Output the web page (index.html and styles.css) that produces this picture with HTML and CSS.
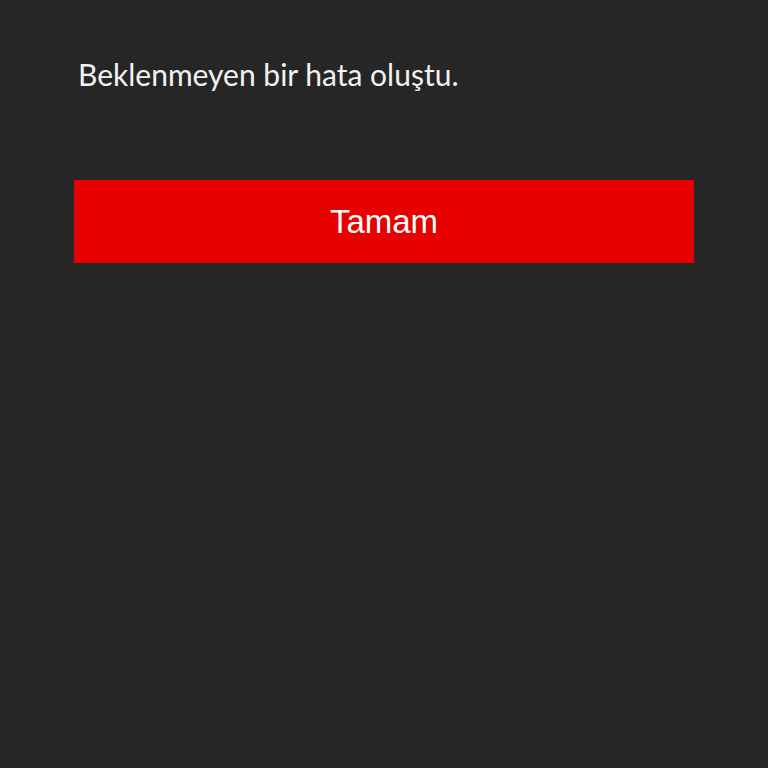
FILE: index.html
```html
<!DOCTYPE html>
<html lang="tr">
<head>
<meta charset="utf-8">
<link rel="stylesheet" href="styles.css">
</head>
<body>
<main class="dialog">
  <p class="message">Beklenmeyen bir hata oluştu.</p>
  <button class="ok-btn" type="button">Tamam</button>
</main>
</body>
</html>
```
FILE: styles.css
```css
html, body {
  margin: 0;
  padding: 0;
  background: #262626;
  height: 100%;
}
.dialog {
  display: flex;
  flex-direction: column;
  padding: 56px 74px 0 74px;
}
.message {
  margin: 0 0 0 4px;
  color: #f2f2f2;
  font-family: Lato, "Open Sans", sans-serif;
  font-size: 30px;
  line-height: 36px;
  font-weight: 400;
}
.ok-btn {
  margin-top: 88px;
  width: 620px;
  height: 83px;
  border: none;
  background: #e60000;
  color: #ffffff;
  font-family: "Liberation Sans", Arial, sans-serif;
  font-size: 33px;
  padding: 0;
  cursor: pointer;
}
```
